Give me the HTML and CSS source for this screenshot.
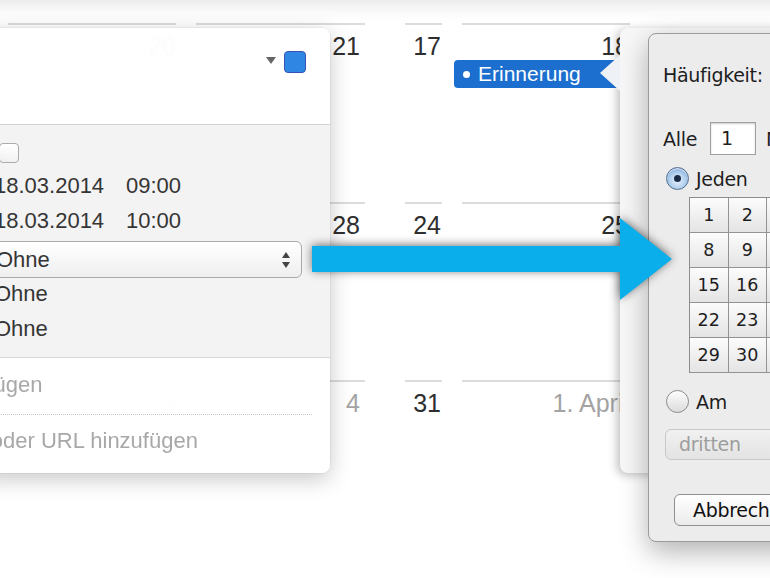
FILE: index.html
```html
<!DOCTYPE html>
<html lang="de">
<head>
  <meta charset="UTF-8">
  <meta name="viewport" content="width=device-width, initial-scale=1.0">
  <title>Erinnerung wiederholen</title>
  <link rel="stylesheet" href="styles.css">
</head>
<body>
  <div class="stage">
    <!-- calendar behind everything -->
    <div class="calendar">
      <div class="day col-a"><span class="day-num">20</span></div>
      <div class="day col-b"><span class="day-num">21</span></div>
      <div class="day col-c"><span class="day-num">17</span></div>
      <div class="day col-d">
        <span class="day-num">18</span>
        <div class="event"><span class="event-dot"></span>Erinnerung</div>
      </div>

      <div class="day col-a"></div>
      <div class="day col-b"><span class="day-num">28</span></div>
      <div class="day col-c"><span class="day-num">24</span></div>
      <div class="day col-d"><span class="day-num">25</span></div>

      <div class="day col-a muted"><span class="day-num">3</span></div>
      <div class="day col-b muted"><span class="day-num">4</span></div>
      <div class="day col-c"><span class="day-num">31</span></div>
      <div class="day col-d muted"><span class="day-num">1. April</span></div>
    </div>

    <!-- event inspector popover, mostly covered by the sheet -->
    <div class="inspector"></div>

    <!-- repeat sheet -->
    <div class="sheet">
      <div class="sheet-title">Häufigkeit:</div>
      <div class="every-row">
        <span>Alle</span>
        <span class="num-input">1</span>
        <span>Monat(e)</span>
      </div>
      <div class="radio-row">
        <span class="radio checked"></span>
        <span>Jeden</span>
      </div>
      <div class="month-days">
        <span>1</span><span>2</span><span>3</span><span>4</span><span>5</span><span>6</span><span>7</span>
        <span>8</span><span>9</span><span>10</span><span>11</span><span>12</span><span>13</span><span>14</span>
        <span>15</span><span>16</span><span>17</span><span>18</span><span>19</span><span>20</span><span>21</span>
        <span>22</span><span>23</span><span>24</span><span>25</span><span>26</span><span>27</span><span>28</span>
        <span>29</span><span>30</span><span>31</span><span></span><span></span><span></span><span></span>
      </div>
      <div class="radio-row radio-am">
        <span class="radio"></span>
        <span>Am</span>
      </div>
      <div class="popup-disabled">dritten</div>
      <div class="sheet-button">Abbrechen</div>
    </div>

    <!-- event editor popover -->
    <div class="editor">
      <div class="editor-head">
        <span class="color-menu"></span>
        <span class="color-swatch"></span>
      </div>
      <div class="editor-body">
        <span class="check"></span>
        <div class="field-row date-first"><span class="date">18.03.2014</span>09:00</div>
        <div class="field-row date-second"><span class="date">18.03.2014</span>10:00</div>
        <div class="select">
          Ohne
          <span class="stepper"><span class="up"></span><span class="down"></span></span>
        </div>
        <div class="field-row ohne-first">Ohne</div>
        <div class="field-row ohne-last">Ohne</div>
      </div>
      <div class="editor-foot">
        <div class="placeholder invitees">Teilnehmer hinzufügen</div>
        <div class="dotted"></div>
        <div class="placeholder notes">Notizen, Anhänge oder URL hinzufügen</div>
      </div>
    </div>

    <svg class="pointer-arrow" width="390" height="110" viewBox="0 0 390 110">
      <polygon points="12,41 320,41 320,13 372,54 320,95 320,67 12,67" fill="#0aaeea"/>
    </svg>
  </div>
</body>
</html>
```

FILE: styles.css
```css
* {
  box-sizing: border-box;
}

body {
  margin: 0;
  padding: 0;
  background: #fff;
  font-family: "Liberation Sans", Arial, sans-serif;
}

.stage {
  position: relative;
  width: 770px;
  height: 578px;
  overflow: hidden;
  background: linear-gradient(#ececec 0, #fafafa 12px, #fff 22px);
}

/* calendar */

.calendar {
  display: grid;
  grid-template-columns: 168px 20px 169px 40px 37px 20px 168px;
  grid-auto-rows: 178.5px;
  padding: 23px 0 0 8px;
}

.day {
  border-top: 2px solid #dcdcdc;
  padding-top: 9px;
  text-align: right;
  font-size: 25px;
  line-height: 25px;
  color: #2e2e2e;
}

.day.muted {
  color: #a3a3a3;
}

.day-num {
  display: block;
}

.col-a { grid-column: 1; }
.col-b { grid-column: 3; padding-right: 5px; }
.col-c { grid-column: 5; padding-right: 1px; }
.col-d { grid-column: 7; padding-right: 1px; }

.event {
  display: flex;
  align-items: center;
  gap: 8px;
  height: 28px;
  margin: 1px 0 0 -8px;
  padding-left: 9px;
  background: #1c6fcf;
  border-radius: 4px 0 0 4px;
  color: #fff;
  font-size: 21px;
  line-height: 28px;
  text-align: left;
}

.event-dot {
  width: 7px;
  height: 7px;
  border-radius: 50%;
  background: #fff;
}

/* second popover */

.inspector {
  position: absolute;
  left: 620px;
  top: 28px;
  width: 200px;
  height: 445px;
  background: #f7f7f7;
  border-radius: 8px;
  box-shadow: -3px 2px 10px rgba(0, 0, 0, 0.25);
}

.inspector::before {
  content: "";
  position: absolute;
  left: -20px;
  top: 27px;
  border-top: 18px solid transparent;
  border-bottom: 18px solid transparent;
  border-right: 20px solid #eef2f6;
}

/* repeat sheet */

.sheet {
  position: absolute;
  left: 648px;
  top: 33px;
  width: 220px;
  height: 509px;
  padding: 30px 0 0 14px;
  background: #ececec;
  border: 1px solid #9b9b9b;
  border-radius: 8px;
  box-shadow: 0 10px 28px rgba(0, 0, 0, 0.3);
  font-family: "DejaVu Sans", sans-serif;
  font-size: 19px;
  letter-spacing: -0.3px;
  line-height: 22px;
  color: #1e1e1e;
  white-space: nowrap;
}

.every-row {
  display: flex;
  align-items: center;
  gap: 13px;
  height: 33px;
  margin-top: 36px;
}

.num-input {
  width: 46px;
  height: 33px;
  padding-left: 10px;
  line-height: 31px;
  background: #fff;
  border: 1px solid #a0a0a0;
  box-shadow: inset 0 1px 2px rgba(0, 0, 0, 0.2);
}

.every-row .num-input + span {
  margin-left: -3px;
}

.radio-row {
  display: flex;
  align-items: center;
  gap: 7px;
  height: 23px;
  margin: 12px 0 0 3px;
}

.radio {
  position: relative;
  width: 23px;
  height: 23px;
  border-radius: 50%;
  border: 1px solid #8a8a8a;
  background: linear-gradient(#fdfdfd, #dcdcdc);
  box-shadow: inset 0 1px 1px rgba(255, 255, 255, 0.8);
}

.radio.checked {
  border-color: #56708f;
  background: radial-gradient(circle at 50% 60%, #e9f2fb 0, #b6d2ef 45%, #5d92cf 100%);
}

.radio.checked::after {
  content: "";
  position: absolute;
  left: 7px;
  top: 7px;
  width: 7px;
  height: 7px;
  border-radius: 50%;
  background: #1a2c45;
}

.month-days {
  display: grid;
  grid-template-columns: repeat(7, 38.5px);
  grid-auto-rows: 35px;
  width: max-content;
  margin: 7px 0 0 26px;
  border-top: 1px solid #8c8c8c;
  border-left: 1px solid #8c8c8c;
  font-size: 17.5px;
  letter-spacing: 0;
}

.month-days span {
  display: flex;
  align-items: center;
  justify-content: center;
  border-right: 1px solid #939393;
  border-bottom: 1px solid #939393;
  background: linear-gradient(#fcfcfc, #e4e4e4);
}

.radio-am {
  margin-top: 17px;
}

.popup-disabled {
  width: 200px;
  height: 31px;
  margin: 16px 0 0 2px;
  padding-left: 13px;
  line-height: 29px;
  color: #9d9d9d;
  background: linear-gradient(#f1f1f1, #e3e3e3);
  border: 1px solid #c8c8c8;
  border-radius: 6px;
}

.sheet-button {
  width: 140px;
  height: 32px;
  margin: 34px 0 0 11px;
  padding-left: 18px;
  line-height: 30px;
  color: #111;
  background: linear-gradient(#ffffff, #ebebeb);
  border: 1px solid #8f8f8f;
  border-radius: 6px;
}

/* event editor popover */

.editor {
  position: absolute;
  left: -20px;
  top: 28px;
  width: 350px;
  height: 445px;
  display: flex;
  flex-direction: column;
  border-radius: 8px;
  overflow: hidden;
  box-shadow: 0 6px 22px rgba(0, 0, 0, 0.22), 0 0 0 1px rgba(0, 0, 0, 0.04);
  font-size: 22px;
  color: #353535;
  white-space: nowrap;
}

.editor-head {
  display: flex;
  justify-content: flex-end;
  align-items: flex-start;
  gap: 8px;
  height: 97px;
  padding: 23px 24px 0 0;
  background: rgba(255, 255, 255, 0.975);
  backdrop-filter: blur(1.5px);
  border-bottom: 1px solid #d3d3d3;
}

.color-menu {
  margin-top: 6px;
  border-left: 5px solid transparent;
  border-right: 5px solid transparent;
  border-top: 7px solid #666;
}

.color-swatch {
  width: 22px;
  height: 22px;
  background: #2f87e3;
  border: 1.5px solid #3553b5;
  border-radius: 4px;
}

.editor-body {
  display: flex;
  flex-direction: column;
  align-items: flex-start;
  height: 233px;
  padding: 18px 0 0 14px;
  background: #f3f3f3;
  border-bottom: 1px solid #d6d6d6;
}

.check {
  width: 20px;
  height: 20px;
  margin-left: 5px;
  background: linear-gradient(#fff, #f1f1f1);
  border: 1px solid #ababab;
  border-radius: 4px;
}

.field-row {
  line-height: 28px;
}

.date {
  display: inline-block;
  width: 132px;
}

.date-first {
  margin-top: 9px;
}

.date-second {
  margin-top: 7px;
}

.ohne-first {
  margin-top: 2px;
}

.ohne-last {
  margin-top: 7px;
}

.select {
  display: flex;
  justify-content: space-between;
  align-items: center;
  width: 316px;
  height: 37px;
  margin: 6px 0 0 -8px;
  padding: 0 11px 0 9px;
  line-height: 35px;
  background: linear-gradient(#ffffff, #efefef);
  border: 1px solid #a9a9a9;
  border-radius: 6px;
}

.stepper {
  display: flex;
  flex-direction: column;
  gap: 4px;
}

.stepper .up {
  border-left: 4px solid transparent;
  border-right: 4px solid transparent;
  border-bottom: 6px solid #444;
}

.stepper .down {
  border-left: 4px solid transparent;
  border-right: 4px solid transparent;
  border-top: 6px solid #444;
}

.editor-foot {
  flex: 1;
  padding: 12.5px 0 0 14px;
  background: rgba(255, 255, 255, 0.975);
  backdrop-filter: blur(1.5px);
  color: #a8a8a8;
}

.placeholder {
  line-height: 28px;
}

.invitees {
  margin-left: -173px;
}

.notes {
  margin: 11.5px 0 0 -183px;
}

.dotted {
  width: 318px;
  margin-top: 15.5px;
  border-top: 1px dotted #c4c4c4;
}

/* big blue pointer */

.pointer-arrow {
  position: absolute;
  left: 300px;
  top: 205px;
  overflow: visible;
  filter: drop-shadow(0 -1px 5px rgba(0, 0, 0, 0.55));
}
```
